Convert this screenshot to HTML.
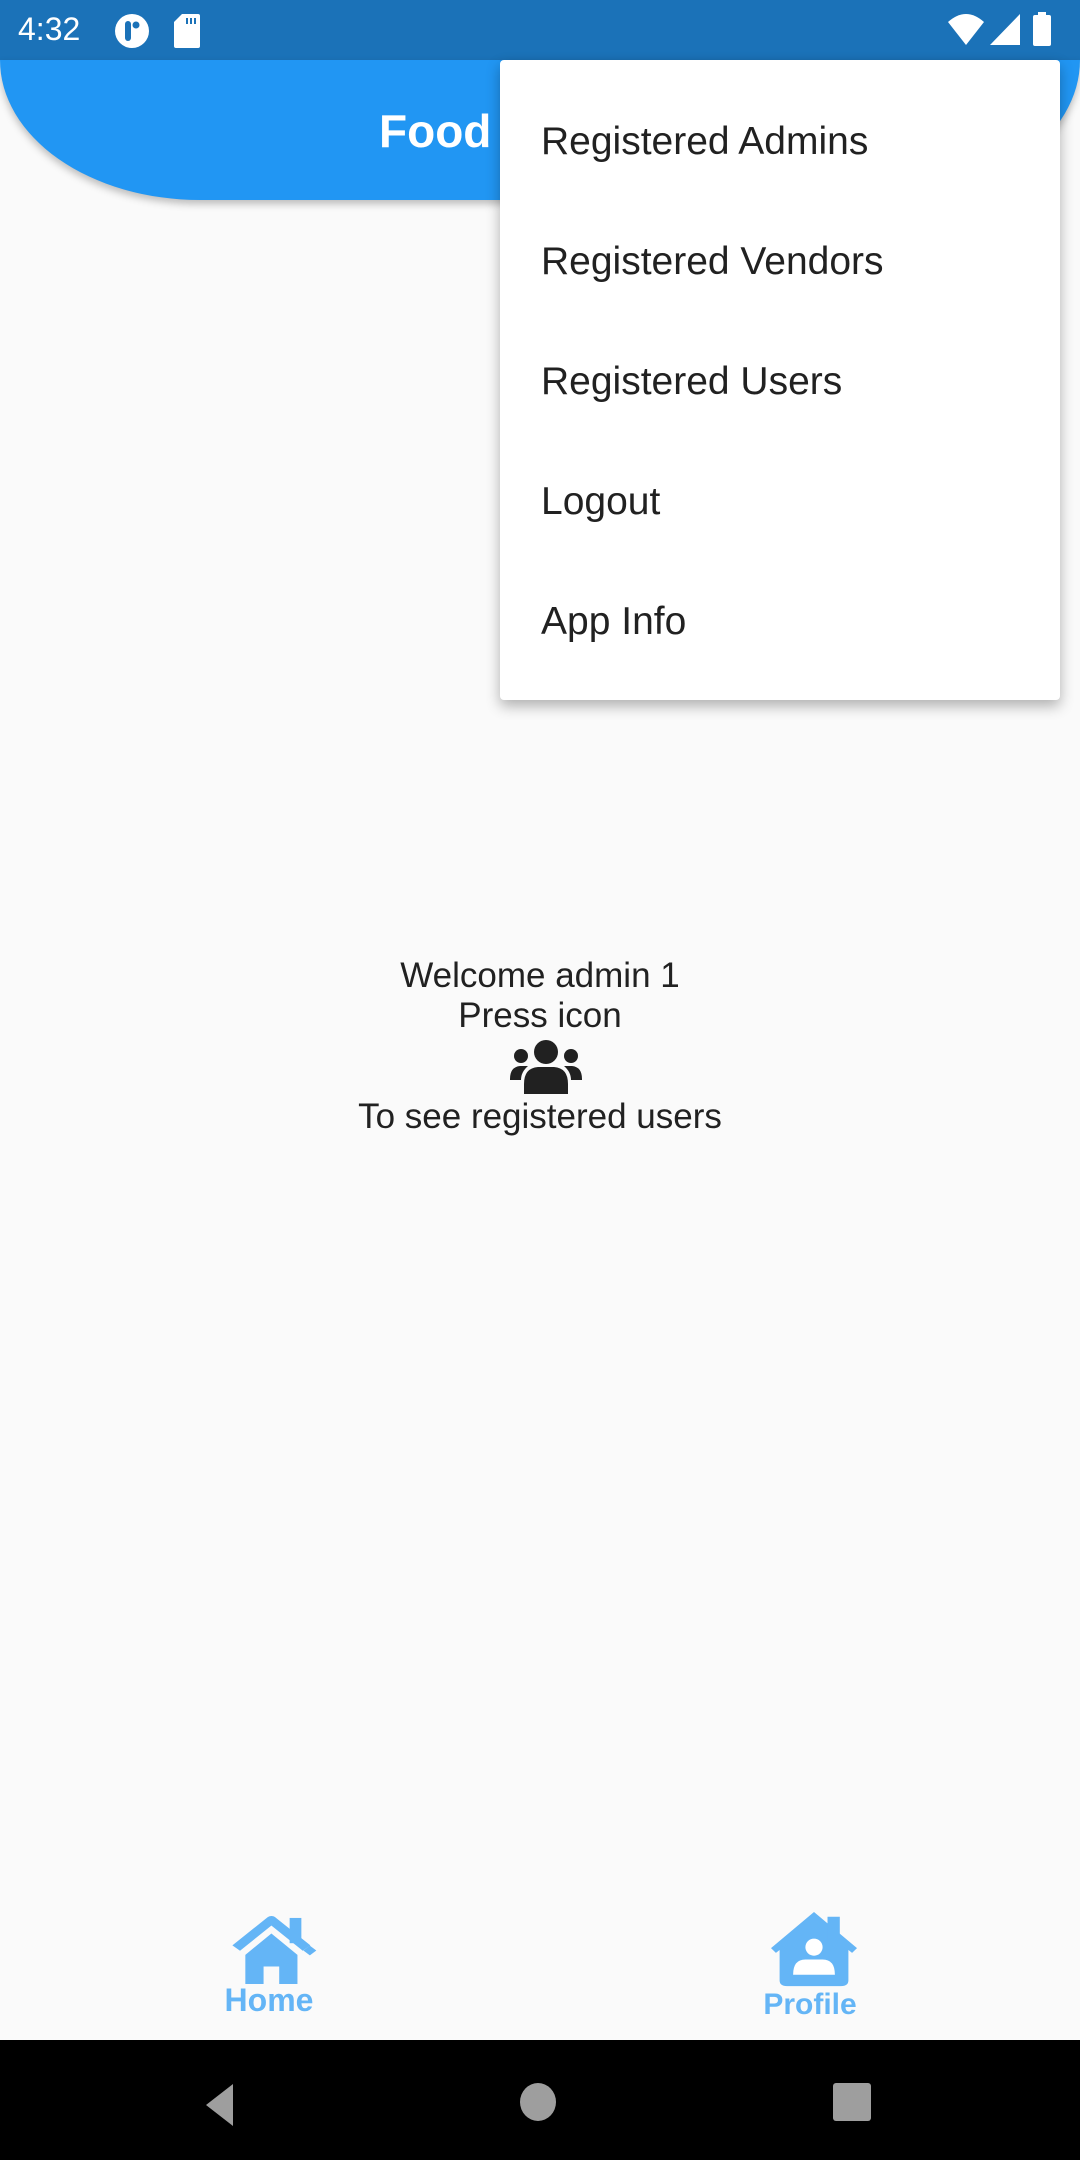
<!DOCTYPE html>
<html><head><meta charset="utf-8"><style>
*{margin:0;padding:0;box-sizing:border-box}
body{width:1080px;height:2160px;background:#fafafa;position:relative;overflow:hidden;font-family:"Liberation Sans",Roboto,sans-serif}
.status{position:absolute;left:0;top:0;width:1080px;height:60px;background:#1b72b8;color:#fff}
.appbar{position:absolute;left:0;top:60px;width:1080px;height:140px;background:#2196f3;border-bottom-left-radius:200px 140px;border-bottom-right-radius:200px 140px;box-shadow:0 4px 8px rgba(0,0,0,.25)}
.title{position:absolute;left:379px;top:104px;color:#fff;font-size:46px;font-weight:bold}
.menu{position:absolute;left:500px;top:60px;width:560px;height:640px;background:#fff;border-radius:4px;box-shadow:0 6px 14px rgba(0,0,0,.3)}
.menu div{position:absolute;left:41px;font-size:39px;color:#212121}
.c{position:absolute;left:0;width:1080px;text-align:center;font-size:35px;color:#212121}
.nav{position:absolute;left:0;top:2040px;width:1080px;height:120px;background:#000}
.lbl{position:absolute;color:#64b5f6;font-weight:bold;font-size:32px;text-align:center;width:200px}
</style></head><body>
<div class="status">
<div style="position:absolute;left:18px;top:11px;font-size:32px">4:32</div>
<svg style="position:absolute;left:114px;top:13px" width="36" height="36" viewBox="0 0 36 36"><circle cx="18" cy="18" r="17" fill="#fff"/><rect x="11" y="8" width="6" height="20" rx="3" fill="#1b72b8"/><circle cx="22" cy="12" r="3.5" fill="#1b72b8"/></svg>
<svg style="position:absolute;left:174px;top:14px" width="26" height="34" viewBox="0 0 26 34"><path d="M8 0H24a2 2 0 0 1 2 2V32a2 2 0 0 1-2 2H2a2 2 0 0 1-2-2V8Z" fill="#fff"/><rect x="12" y="4" width="2" height="6" fill="#1b72b8"/><rect x="16" y="4" width="2" height="6" fill="#1b72b8"/><rect x="20" y="4" width="2" height="6" fill="#1b72b8"/></svg>
<svg style="position:absolute;left:948px;top:14px" width="36" height="32" viewBox="0 0 36 32"><path d="M0 8Q18-8 36 8L18 31Z" fill="#fff"/></svg>
<svg style="position:absolute;left:990px;top:14px" width="30" height="32" viewBox="0 0 30 32"><path d="M30 0V31H0Z" fill="#fff"/></svg>
<svg style="position:absolute;left:1032px;top:12px" width="20" height="34" viewBox="0 0 20 34"><rect x="6" y="0" width="8" height="4" fill="#fff"/><rect x="1" y="3" width="18" height="31" rx="2" fill="#fff"/></svg>
</div>
<div class="appbar"></div>
<div class="title">Food</div>
<div class="menu">
<div style="top:60px">Registered Admins</div>
<div style="top:180px">Registered Vendors</div>
<div style="top:300px">Registered Users</div>
<div style="top:420px">Logout</div>
<div style="top:540px">App Info</div>
</div>
<div class="c" style="top:956px">Welcome admin 1</div>
<div class="c" style="top:996px">Press icon</div>
<svg style="position:absolute;left:508px;top:1040px" width="76" height="56" viewBox="0 0 76 56"><circle cx="38" cy="12" r="12" fill="#212121"/><circle cx="13" cy="16" r="7" fill="#212121"/><circle cx="63" cy="16" r="7" fill="#212121"/><path d="M16 54V44Q16 28 30 27H46Q60 28 60 44V54Z" fill="#212121"/><path d="M2 39Q2 27 12 26H20Q13 32 13 40H2Z" fill="#212121"/><path d="M74 39Q74 27 64 26H56Q63 32 63 40H74Z" fill="#212121"/></svg>
<div class="c" style="top:1097px">To see registered users</div>
<svg style="position:absolute;left:231px;top:1916px" width="86" height="68" viewBox="0 0 66 70" preserveAspectRatio="none"><path d="M4 33L31 4L58 33" fill="none" stroke="#64b5f6" stroke-width="8" stroke-linejoin="round"/><rect x="45" y="2" width="9" height="26" fill="#64b5f6"/><path d="M58 33L63 38" stroke="#64b5f6" stroke-width="7"/><path d="M11 40L31 18L51 40V70H37V52H25V70H11Z" fill="#64b5f6"/></svg>
<div class="lbl" style="left:169px;top:1982px">Home</div>
<svg style="position:absolute;left:771px;top:1912px" width="86" height="76" viewBox="0 0 70 80" preserveAspectRatio="none"><path d="M0 38L35 0L70 38L66 43L63 40V72Q63 78 57 78H13Q7 78 7 72V40L4 43Z" fill="#64b5f6"/><rect x="46" y="5" width="10" height="25" fill="#64b5f6"/><ellipse cx="35" cy="37" rx="7" ry="9" fill="#fff"/><path d="M18 66Q18 50 28 50H42Q52 50 52 66Z" fill="#fff"/></svg>
<div class="lbl" style="left:710px;top:1988px;font-size:30px">Profile</div>
<div class="nav">
<svg style="position:absolute;left:206px;top:44px" width="28" height="42" viewBox="0 0 28 42"><path d="M27 0V42L0 21Z" fill="#9e9e9e"/></svg>
<div style="position:absolute;left:520px;top:43px;width:36px;height:38px;border-radius:50%;background:#9e9e9e"></div>
<div style="position:absolute;left:833px;top:43px;width:38px;height:38px;border-radius:3px;background:#9e9e9e"></div>
</div>
</body></html>
